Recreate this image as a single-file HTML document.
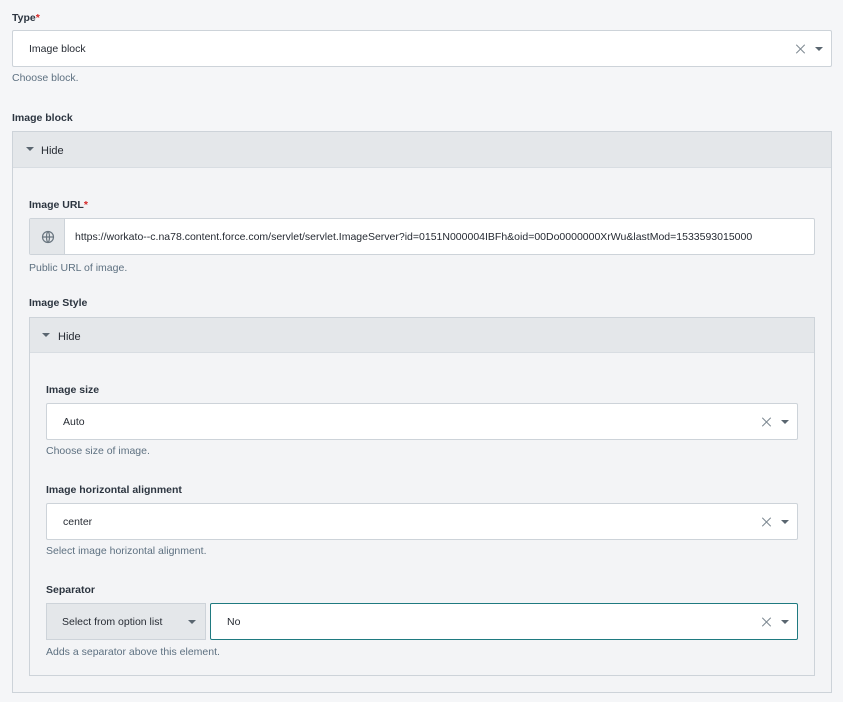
<!DOCTYPE html>
<html><head><style>
*{box-sizing:border-box;margin:0;padding:0}
body{width:843px;height:702px;background:#f5f6f8;font-family:"Liberation Sans",sans-serif;font-size:11px;color:#262b33;position:relative;overflow:hidden}
.a{position:absolute}
.lbl{font-weight:600;font-size:10.5px;color:#2c3540}
.req{color:#d62828}
.help{color:#5d7080;font-size:10.5px}
.box{background:#fff;border:1px solid #cdd3d9;border-radius:2px}
.txt{position:absolute;top:12px;font-size:10.5px}
.x{position:absolute;width:10px;height:10px;top:13px}
.x:before,.x:after{content:"";position:absolute;left:5px;top:-1px;width:1px;height:12px;background:#7d8891}
.x:before{transform:rotate(45deg)}.x:after{transform:rotate(-45deg)}
.tri{position:absolute;width:0;height:0;border-left:4px solid transparent;border-right:4px solid transparent;border-top:4px solid #5a6670}
.hdr{background:#e4e7ea;border-bottom:1px solid #d8dde2}
</style></head><body>
<div class="a lbl" style="left:12px;top:12px">Type<span class="req">*</span></div>
<div class="a box" style="left:12px;top:30px;width:820px;height:37px"><span class="txt" style="left:16px">Image block</span><i class="x" style="left:782px"></i><i class="tri" style="left:802px;top:16px"></i></div>
<div class="a help" style="left:12px;top:72px">Choose block.</div>
<div class="a lbl" style="left:12px;top:112px">Image block</div>
<div class="a" style="left:12px;top:131px;width:820px;height:562px;border:1px solid #cdd3d9;background:#f3f4f6">
 <div class="hdr" style="height:36px;position:relative"><i class="tri" style="left:13px;top:15px"></i><span class="a" style="left:28px;top:13px">Hide</span></div>
</div>
<div class="a lbl" style="left:29px;top:199px">Image URL<span class="req">*</span></div>
<div class="a box" style="left:29px;top:218px;width:786px;height:37px">
 <div class="a" style="left:0;top:0;width:35px;height:35px;background:#e4e7ea;border-right:1px solid #cdd3d9"><svg width="14" height="14" viewBox="0 0 14 14" style="position:absolute;left:11px;top:11px" fill="none" stroke="#6a7680" stroke-width="1.2"><circle cx="7" cy="7" r="5.5"/><path d="M1.5 7h11M7 1.5c-2 2-2 9 0 11M7 1.5c2 2 2 9 0 11"/></svg></div>
 <span class="txt" style="left:45px">https://workato--c.na78.content.force.com/servlet/servlet.ImageServer?id=0151N000004IBFh&amp;oid=00Do0000000XrWu&amp;lastMod=1533593015000</span></div>
<div class="a help" style="left:29px;top:262px">Public URL of image.</div>
<div class="a lbl" style="left:29px;top:297px">Image Style</div>
<div class="a" style="left:29px;top:317px;width:786px;height:359px;border:1px solid #cdd3d9;background:#f3f4f6">
 <div class="hdr" style="height:35px;position:relative"><i class="tri" style="left:12px;top:15px"></i><span class="a" style="left:28px;top:13px">Hide</span></div>
</div>
<div class="a lbl" style="left:46px;top:384px">Image size</div>
<div class="a box" style="left:46px;top:403px;width:752px;height:37px"><span class="txt" style="left:16px">Auto</span><i class="x" style="left:714px"></i><i class="tri" style="left:734px;top:16px"></i></div>
<div class="a help" style="left:46px;top:445px">Choose size of image.</div>
<div class="a lbl" style="left:46px;top:484px">Image horizontal alignment</div>
<div class="a box" style="left:46px;top:503px;width:752px;height:37px"><span class="txt" style="left:16px">center</span><i class="x" style="left:714px"></i><i class="tri" style="left:734px;top:16px"></i></div>
<div class="a help" style="left:46px;top:545px">Select image horizontal alignment.</div>
<div class="a lbl" style="left:46px;top:584px">Separator</div>
<div class="a" style="left:46px;top:603px;width:160px;height:37px;background:#e4e7ea;border:1px solid #cdd3d9"><span class="txt" style="left:15px">Select from option list</span><i class="tri" style="left:141px;top:16px"></i></div>
<div class="a box" style="left:210px;top:603px;width:588px;height:37px;border-color:#1f7a80"><span class="txt" style="left:16px">No</span><i class="x" style="left:550px"></i><i class="tri" style="left:570px;top:16px"></i></div>
<div class="a help" style="left:46px;top:646px">Adds a separator above this element.</div>
</body></html>
